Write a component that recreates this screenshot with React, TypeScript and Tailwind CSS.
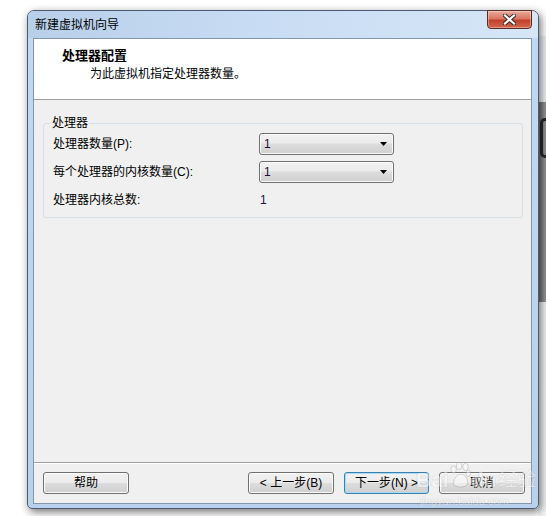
import React from "react";

const FONT = "font-['Liberation_Sans','Noto_Sans_CJK_SC',sans-serif]";

function Btn({ label, w, focus }: { label: string; w: string; focus?: boolean }) {
  return (
    <div
      className={`${w} h-[22px] rounded-[3px] border flex items-center justify-center text-[12px] text-black bg-[linear-gradient(to_bottom,#f2f2f2_0%,#ebebeb_50%,#dddddd_50%,#cfcfcf_100%)] ${
        focus
          ? "border-[#3c7fb1] shadow-[inset_0_0_0_1px_#a6daf7]"
          : "border-[#707070] shadow-[inset_0_0_0_1px_#fbfbfb]"
      }`}
    >
      {label}
    </div>
  );
}

function Combo() {
  return (
    <div className="relative w-[135px] h-[22px] rounded-[3px] border border-[#707070] shadow-[inset_0_0_0_1px_#fbfbfb] bg-[linear-gradient(to_bottom,#f2f2f2_0%,#ebebeb_45%,#dddddd_50%,#cfcfcf_100%)] flex items-center pl-[4px] text-[12px] text-[#2a0a3a]">
      1
      <svg className="absolute right-[5px] top-[8px]" width="8" height="5" viewBox="0 0 8 5">
        <path d="M0 0 H7 L3.5 4 Z" fill="#000" />
      </svg>
    </div>
  );
}

export default function App() {
  return (
    <div className={`relative w-[546px] h-[516px] bg-white overflow-hidden ${FONT}`}>
      {/* background window behind, right strip */}
      <div className="absolute right-0 top-[36px] w-[8px] h-[66px] bg-[#eef3f6]" />
      <div className="absolute right-0 top-[102px] w-[8px] h-[200px] bg-[linear-gradient(to_right,#6f6f6f,#9a9a9a)]" />
      <div className="absolute right-[-4px] top-[118px] w-[10px] h-[40px] rounded-full border-[3px] border-[#2a2a2a]" />
      <div className="absolute right-0 top-[302px] w-[8px] h-[214px] bg-[#f4f4f4]" />

      {/* window */}
      <div className="absolute left-[27px] top-[10px] w-[512px] h-[499px] rounded-t-[7px] rounded-b-[5px] border border-[#4b5b70] bg-[linear-gradient(to_bottom,#c3d8f1,#b9d1ec)] shadow-[2px_3px_9px_rgba(0,0,0,0.55)] flex flex-col">
        {/* title bar */}
        <div className="relative h-[27px] shrink-0 rounded-t-[6px] bg-[linear-gradient(to_right,#b8cfea,#c8dcf3_45%,#d6e6f7)] flex items-center pl-[7px] pt-[1px] text-[12px] text-black">
          新建虚拟机向导
          <div className="absolute right-[6px] top-[-1px] w-[45px] h-[19px] rounded-b-[4px] border border-[#5a2a24] bg-[linear-gradient(to_bottom,#e9a99b_0%,#d97763_45%,#c0422c_55%,#d2664c_100%)] shadow-[inset_0_0_0_1px_rgba(255,255,255,0.35)] flex items-center justify-center">
            <svg width="13" height="11" viewBox="0 0 13 11">
              <path d="M2 1.5 L11 9.5 M11 1.5 L2 9.5" stroke="#3a2a28" strokeWidth="4.2" strokeLinecap="square" />
              <path d="M2 1.5 L11 9.5 M11 1.5 L2 9.5" stroke="#ffffff" strokeWidth="2.2" strokeLinecap="square" />
            </svg>
          </div>
        </div>

        {/* content */}
        <div className="flex-1 ml-[5px] mr-[6px] mb-[4px] border border-[#8296ae] bg-[#f0f0f0] flex flex-col">
          {/* header */}
          <div className="h-[61px] shrink-0 bg-white border-b border-[#a0a0a0] pl-[28px] pt-[9px]">
            <div className="text-[13px] font-bold leading-[16px] text-black">处理器配置</div>
            <div className="pl-[28px] pt-[2px] text-[12px] leading-[16px] text-black">为此虚拟机指定处理器数量。</div>
          </div>

          {/* body */}
          <div className="flex-1 pl-[9px] pr-[8px] pt-[23px]">
            <div className="relative border border-[#d5dfe5] rounded-[3px] pl-[9px] pt-[9px] pb-[6px]">
              <div className="absolute left-[7px] top-[-9px] px-[1px] bg-[#f0f0f0] text-[12px] leading-[16px] text-black">处理器</div>
              <div className="grid grid-cols-[206px_135px] gap-y-[6px] text-[12px] text-black">
                <div className="h-[22px] flex items-center">处理器数量(P):</div>
                <Combo />
                <div className="h-[22px] flex items-center">每个处理器的内核数量(C):</div>
                <Combo />
                <div className="h-[22px] flex items-center">处理器内核总数:</div>
                <div className="h-[22px] flex items-center pl-[1px] text-[#2a0a3a]">1</div>
              </div>
            </div>
          </div>

          {/* footer */}
          <div className="h-[41px] shrink-0 border-t border-[#a0a0a0] shadow-[inset_0_1px_0_#ffffff] flex items-center justify-between pl-[9px] pr-[6px]">
            <Btn label="帮助" w="w-[86px]" />
            <div className="flex gap-[10px]">
              <Btn label="< 上一步(B)" w="w-[86px]" />
              <Btn label="下一步(N) >" w="w-[85px]" focus />
              <Btn label="取消" w="w-[86px]" />
            </div>
          </div>
        </div>
      </div>

      {/* watermark */}
      <div className="absolute left-[416px] top-[462px] flex items-end opacity-45 text-white [text-shadow:0_0_1px_#7a7a7a] pointer-events-none">
        <span className="text-[21px] font-bold leading-[26px] font-['Liberation_Sans',sans-serif]">Bai</span>
        <svg width="22" height="28" viewBox="0 0 24 30" className="mb-[3px]">
          <g fill="#ffffff" stroke="#8a8a8a" strokeWidth="0.8">
            <ellipse cx="5" cy="8" rx="3" ry="4" />
            <ellipse cx="11" cy="4" rx="3" ry="4" />
            <ellipse cx="18" cy="5" rx="3" ry="4" />
            <ellipse cx="21" cy="12" rx="2.5" ry="3.5" />
            <path d="M5 24 C5 16 10 13 13 13 C17 13 21 17 20 24 C19 28 6 28 5 24 Z" />
          </g>
        </svg>
        <span className="text-[21px] font-bold leading-[26px] font-['Liberation_Sans',sans-serif]">du</span>
        <span className="ml-[2px] text-[19px] leading-[26px]">经验</span>
      </div>
      <div className="absolute left-[420px] top-[495px] opacity-45 text-[11px] leading-[12px] text-white [text-shadow:0_0_1px_#7a7a7a] font-['Liberation_Sans',sans-serif] pointer-events-none">
        jingyan.baidu.com
      </div>
    </div>
  );
}
